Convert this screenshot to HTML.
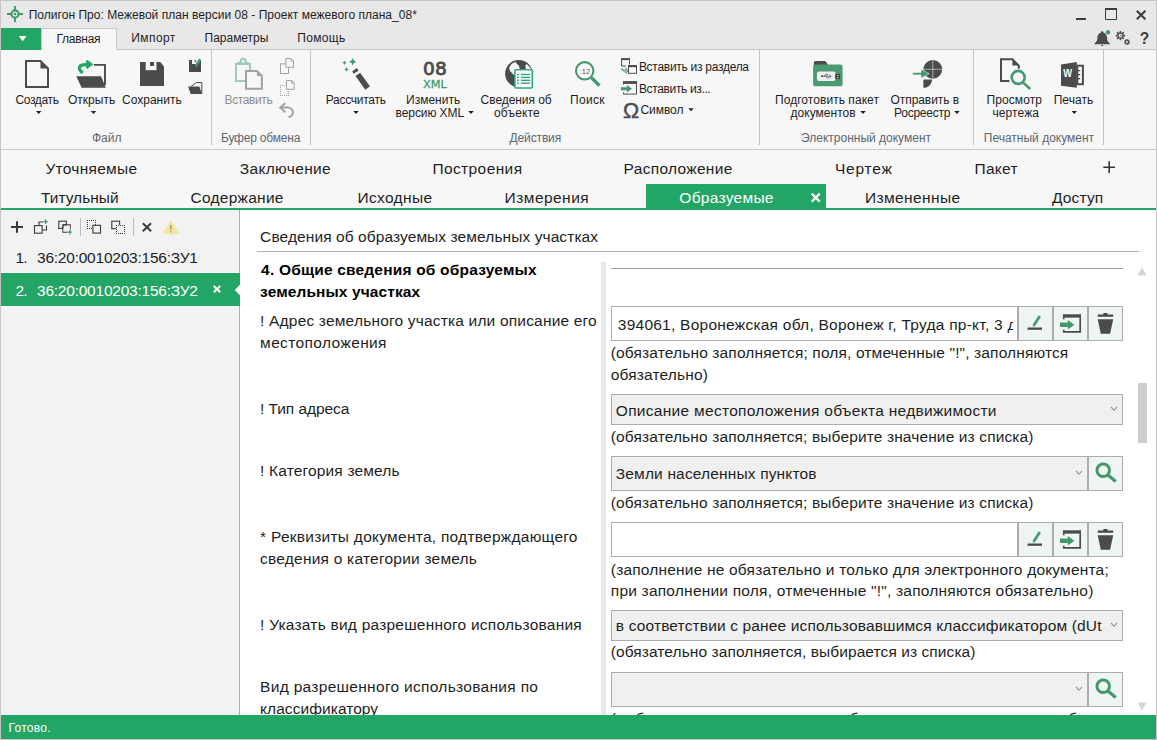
<!DOCTYPE html>
<html lang="ru"><head><meta charset="utf-8"><title>Полигон Про</title>
<style>
html,body{margin:0;padding:0}
body{width:1157px;height:740px;position:relative;overflow:hidden;background:#fff;font-family:"Liberation Sans",sans-serif;}
.t{position:absolute;white-space:nowrap;line-height:20px;z-index:5}
.b{position:absolute;box-sizing:border-box}
svg{position:absolute;overflow:visible}

.in{border:1px solid #a9acb3;background:#fff}
.cb{border:1px solid #a9acb3;background:#f0f0f0}
.bt{border:1px solid #a9acb3;background:#eff5f2}
.sep{background:#c4c4c4;width:1px}

</style></head><body>
<div class="b" style="left:0px;top:0px;width:1157px;height:50px;background:#e8e8e8"></div>
<div class="b" style="left:0px;top:49px;width:1157px;height:101px;background:#f7f7f7;border-top:1px solid #c9c9c9;border-bottom:1px solid #c9c9c9"></div>
<div class="b" style="left:0px;top:150px;width:1157px;height:58px;background:#f7f7f7"></div>
<div class="b" style="left:0px;top:208px;width:1157px;height:2px;background:#22a565"></div>
<div class="b" style="left:1px;top:28px;width:40px;height:22px;background:#22a565"></div>
<svg style="left:18px;top:35px;" width="10" height="8" viewBox="0 0 10 8"><path d="M0.800 1h7.800l-3.900 5.200z" fill="#fff"/></svg>
<div class="b" style="left:41px;top:28px;width:76px;height:22px;background:#f7f7f7;border:1px solid #c9c9c9;border-bottom:none"></div>
<div class="b sep" style="left:211px;top:50px;width:1px;height:95px;"></div>
<div class="b sep" style="left:310px;top:50px;width:1px;height:95px;"></div>
<div class="b sep" style="left:759px;top:50px;width:1px;height:95px;"></div>
<div class="b sep" style="left:973px;top:50px;width:1px;height:95px;"></div>
<div class="b sep" style="left:1103px;top:50px;width:1px;height:95px;"></div>
<div class="b" style="left:646px;top:184px;width:180px;height:26px;background:#22a565"></div>
<div class="b" style="left:0px;top:210px;width:240px;height:505px;background:#f2f2f2;border-right:1px solid #ababb2"></div>
<div class="b" style="left:0px;top:272px;width:239px;height:35px;background:#fdfafb"></div>
<div class="b" style="left:0px;top:273px;width:240px;height:33px;background:#22a565"></div>
<svg style="left:234px;top:284px;" width="6" height="12" viewBox="0 0 6 12"><path d="M6 0.400v11.200L0.800 6z" fill="#fff"/></svg>
<div class="b" style="left:80px;top:218px;width:1px;height:18px;background:#b3bcc7"></div>
<div class="b" style="left:133px;top:218px;width:1px;height:18px;background:#b3bcc7"></div>
<div class="b" style="left:257px;top:251px;width:882px;height:1px;background:#adadb2"></div>
<div class="b" style="left:611px;top:268px;width:512px;height:1px;background:#a0a0a0"></div>
<div class="b" style="left:601px;top:262px;width:5px;height:453px;background:#e9e9e9"></div>
<div class="b" style="left:1138px;top:383px;width:9px;height:60px;background:#cdcdcd"></div>
<svg style="left:1137px;top:267px;" width="10" height="9" viewBox="0 0 10 9"><path d="M5 0.5L9.5 8.5H0.5z" fill="#d4d4d4"/></svg>
<svg style="left:1137px;top:702px;" width="10" height="9" viewBox="0 0 10 9"><path d="M5 8.5L9.5 0.5H0.5z" fill="#d4d4d4"/></svg>
<div class="b in" style="left:611px;top:306px;width:407px;height:35px;"></div>
<div class="b bt" style="left:1018px;top:306px;width:35px;height:35px;"></div><div class="b bt" style="left:1053px;top:306px;width:35px;height:35px;"></div><div class="b bt" style="left:1088px;top:306px;width:35px;height:35px;"></div>
<div class="b cb" style="left:611px;top:394px;width:512px;height:31px;"></div>
<div class="b cb" style="left:611px;top:456px;width:477px;height:35px;"></div>
<div class="b bt" style="left:1088px;top:456px;width:35px;height:35px;"></div>
<div class="b in" style="left:611px;top:522px;width:407px;height:35px;"></div>
<div class="b bt" style="left:1018px;top:522px;width:35px;height:35px;"></div><div class="b bt" style="left:1053px;top:522px;width:35px;height:35px;"></div><div class="b bt" style="left:1088px;top:522px;width:35px;height:35px;"></div>
<div class="b cb" style="left:611px;top:610px;width:512px;height:31px;"></div>
<div class="b cb" style="left:611px;top:672px;width:477px;height:35px;"></div>
<div class="b bt" style="left:1088px;top:672px;width:35px;height:35px;"></div>
<svg style="left:1110px;top:406px;" width="8" height="6" viewBox="0 0 8 6"><path d="M1 1l3 3.2L7 1" fill="none" stroke="#9a9a9a" stroke-width="1.1"/></svg>
<svg style="left:1075px;top:470px;" width="8" height="6" viewBox="0 0 8 6"><path d="M1 1l3 3.2L7 1" fill="none" stroke="#9a9a9a" stroke-width="1.1"/></svg>
<svg style="left:1110px;top:622px;" width="8" height="6" viewBox="0 0 8 6"><path d="M1 1l3 3.2L7 1" fill="none" stroke="#9a9a9a" stroke-width="1.1"/></svg>
<svg style="left:1075px;top:686px;" width="8" height="6" viewBox="0 0 8 6"><path d="M1 1l3 3.2L7 1" fill="none" stroke="#9a9a9a" stroke-width="1.1"/></svg>
<svg style="left:0;top:0;z-index:6" width="1157" height="740" viewBox="0 0 1157 740"><circle cx="15" cy="14" r="3.6" fill="none" stroke="#43996e" stroke-width="2.1"/><circle cx="15" cy="14" r="1.3" fill="#43996e" stroke="none" stroke-width="1"/><path d="M15 6v4.6M15 17.4V22M7 14h4.6M18.4 14H23" fill="none" stroke="#43996e" stroke-width="1.9" /><rect x="1076" y="18" width="10" height="2" fill="#3c3c3c" stroke="none" stroke-width="1" /><path d="M1105.5 9v10.5h11V9z" fill="none" stroke="#3c3c3c" stroke-width="1" /><rect x="1105" y="8" width="12" height="2" fill="#3c3c3c" stroke="none" stroke-width="1" /><path d="M1136.8 10.8l8.6 8.4M1145.4 10.8l-8.6 8.4" fill="none" stroke="#3c3c3c" stroke-width="2.1" /><path d="M1102.2 31.2c-1 0-1.3 .6-1.3 1.4c-2.6 .9-3.6 3.2-3.6 6c0 2.3-.9 3.6-2.6 4.6c-.5 .3-.4 1.1 .3 1.1h14.4c.7 0 .8-.8 .3-1.1c-1.7-1-2.6-2.3-2.6-4.6c0-2.8-1-5.1-3.6-6c0-.8-.3-1.4-1.3-1.4z" fill="#4b4b4b" stroke="none" stroke-width="1" /><rect x="1101.2" y="45" width="2" height="1" fill="#4b4b4b" stroke="none" stroke-width="1" /><circle cx="1108" cy="32.3" r="2.2" fill="#43996e" stroke="none" stroke-width="1"/><circle cx="1120.4" cy="35.6" r="2.5" fill="none" stroke="#4b4b4b" stroke-width="1.3"/><path d="M1123.10 35.60L1125.10 35.60M1122.31 37.51L1123.72 38.92M1120.40 38.30L1120.40 40.30M1118.49 37.51L1117.08 38.92M1117.70 35.60L1115.70 35.60M1118.49 33.69L1117.08 32.28M1120.40 32.90L1120.40 30.90M1122.31 33.69L1123.72 32.28" fill="none" stroke="#4b4b4b" stroke-width="1.6" /><circle cx="1120.4" cy="35.6" r="0.7" fill="#4b4b4b" stroke="none" stroke-width="1"/><circle cx="1127" cy="42" r="1.5" fill="none" stroke="#4b4b4b" stroke-width="1.1"/><path d="M1128.70 42.00L1129.90 42.00M1128.20 43.20L1129.05 44.05M1127.00 43.70L1127.00 44.90M1125.80 43.20L1124.95 44.05M1125.30 42.00L1124.10 42.00M1125.80 40.80L1124.95 39.95M1127.00 40.30L1127.00 39.10M1128.20 40.80L1129.05 39.95" fill="none" stroke="#4b4b4b" stroke-width="1.4000000000000001" /><path d="M26 61h14.5l7.5 7.5V87H26z" fill="none" stroke="#4b4b4b" stroke-width="2" /><path d="M40.5 61v7.5H48z" fill="#4b4b4b" stroke="none" stroke-width="1" /><path d="M36.0 111h5.4l-2.7 3z" fill="#1e1e1e" stroke="none" stroke-width="1" /><path d="M90.8 111h5.4l-2.7 3z" fill="#1e1e1e" stroke="none" stroke-width="1" /><path d="M353.3 111h5.4l-2.7 3z" fill="#1e1e1e" stroke="none" stroke-width="1" /><path d="M1071.6 111h5.4l-2.7 3z" fill="#1e1e1e" stroke="none" stroke-width="1" /><path d="M76.300 76.200h24.700l4.900 11.600H81.700z" fill="#4b4b4b" stroke="none" stroke-width="1" /><path d="M94 64.900h11v20" fill="none" stroke="#4b4b4b" stroke-width="1.9" /><path d="M83 72.400C79.300 71.400 78.600 67.800 80.300 66C81.900 64.300 84.500 64.300 89.500 64.300" fill="none" stroke="#22a565" stroke-width="3.3" /><path d="M86.300 60.800l4.700 3.500l-4.700 3.500" fill="none" stroke="#22a565" stroke-width="2.8" /><path d="M140 62h20.3l3.7 4.4V86H140z" fill="#4b4b4b" stroke="none" stroke-width="1" /><rect x="145.7" y="61.5" width="10.8" height="8.7" fill="#f7f7f7" stroke="none" stroke-width="1" /><rect x="150" y="62" width="4" height="4" fill="#4b4b4b" stroke="none" stroke-width="1" /><rect x="189" y="60" width="12" height="12" fill="#4b4b4b" stroke="none" stroke-width="1" /><rect x="192" y="59.5" width="6" height="4.5" fill="#f7f7f7" stroke="none" stroke-width="1" /><rect x="194.6" y="60.3" width="1.6" height="1.6" fill="#4b4b4b" stroke="none" stroke-width="1" /><path d="M200.300 59.200l-4.800 7.200" fill="none" stroke="#43996e" stroke-width="2.5" /><path d="M191 86.5l5.4-4h5.4v11.2" fill="#fbfbfb" stroke="#4b4b4b" stroke-width="1" /><path d="M188.1 86.4h11.3l2.6 7.6h-11.3z" fill="#4b4b4b" stroke="none" stroke-width="1" /><rect x="236" y="64" width="14" height="17" fill="none" stroke="#9fcbb4" stroke-width="2" /><rect x="237.5" y="61.8" width="11" height="2.6" fill="#9fcbb4" stroke="none" stroke-width="1" /><circle cx="243.2" cy="61.3" r="2.5" fill="#f7f7f7" stroke="#9fcbb4" stroke-width="1.9"/><path d="M246 71h10.9l5 5V88.7H246z" fill="#f7f7f7" stroke="#a2a2a2" stroke-width="2" /><path d="M256.9 71v5h5z" fill="#a2a2a2" stroke="none" stroke-width="1" /><rect x="280.5" y="63.9" width="8" height="9.6" fill="none" stroke="#a2a2a2" stroke-width="1" /><path d="M285.8 58.5h5.2l2.5 2.5v6.3h-7.7z" fill="#f7f7f7" stroke="#a2a2a2" stroke-width="1" /><path d="M291 58.5v2.5h2.5" fill="none" stroke="#a2a2a2" stroke-width="1" /><path d="M280 85h1v1h-1zM280 95h1v1h-1zM282 85h1v1h-1zM282 95h1v1h-1zM284 85h1v1h-1zM284 95h1v1h-1zM286 85h1v1h-1zM286 95h1v1h-1zM288 85h1v1h-1zM288 95h1v1h-1zM280 85h1v1h-1zM288 85h1v1h-1zM280 87h1v1h-1zM288 87h1v1h-1zM280 89h1v1h-1zM288 89h1v1h-1zM280 91h1v1h-1zM288 91h1v1h-1zM280 93h1v1h-1zM288 93h1v1h-1zM280 95h1v1h-1zM288 95h1v1h-1z" fill="#a2a2a2" stroke="none" stroke-width="1" /><path d="M286.5 80.5h5.2l2.5 2.5v6.3h-7.7z" fill="#f7f7f7" stroke="#a2a2a2" stroke-width="1" /><path d="M291.7 80.5v2.5h2.5" fill="none" stroke="#a2a2a2" stroke-width="1" /><path d="M280.5 107.6h6.8c3.4 0 5.6 2 5.6 4.8c0 2.4-1.700 4-4.4 4.8" fill="none" stroke="#a2a2a2" stroke-width="2" /><path d="M285.3 103.2l-5 4.4l5 4.6" fill="none" stroke="#a2a2a2" stroke-width="2" /><path d="M352.200 71.500L356.800 68.100L358.600 70.400L353.700 73.800z" fill="#4b4b4b" stroke="none" stroke-width="1" /><path d="M355.500 76.100L360.100 72.700L369.900 86.300L365.300 89.700z" fill="#4b4b4b" stroke="none" stroke-width="1" /><path d="M352.7 58.0L353.921 60.479L356.4 61.7L353.921 62.92100000000001L352.7 65.4L351.479 62.92100000000001L349.0 61.7L351.479 60.479z" fill="#43996e" stroke="none" stroke-width="1" /><path d="M344.5 60.400000000000006L345.259 61.941L346.8 62.7L345.259 63.459L344.5 65.0L343.741 63.459L342.2 62.7L343.741 61.941z" fill="#43996e" stroke="none" stroke-width="1" /><path d="M346.5 67.10000000000001L347.259 68.641L348.8 69.4L347.259 70.159L346.5 71.7L345.741 70.159L344.2 69.4L345.741 68.641z" fill="#43996e" stroke="none" stroke-width="1" /><text x="434.9" y="75.400" text-anchor="middle" font-family="DejaVu Sans, sans-serif" font-size="18.3" fill="#4b4b4b" stroke="#4b4b4b" stroke-width="0.8" textLength="23.6" lengthAdjust="spacingAndGlyphs">08</text><text x="434.9" y="87.900" text-anchor="middle" font-family="DejaVu Sans, sans-serif" font-size="11.2" fill="#43996e" stroke="#43996e" stroke-width="0.3" textLength="23.7" lengthAdjust="spacingAndGlyphs">XML</text><path d="M468.3 111h5.4l-2.7 3z" fill="#1e1e1e" stroke="none" stroke-width="1" /><circle cx="518.85" cy="73.65" r="13.75" fill="#4b4b4b" stroke="none" stroke-width="1"/><path d="M509 67.500L512 63.600L515.800 61.900L517 64.200L518.500 65.300L519.300 67.200L520 69.500V76H515L512.500 73.600L510 71z" fill="#f8f8f8" stroke="none" stroke-width="1" /><path d="M525.300 65.600L526.800 64L531.500 69.300H526z" fill="#f8f8f8" stroke="none" stroke-width="1" /><rect x="514.9" y="69.8" width="17.4" height="18.2" fill="#fff" stroke="#2fa57d" stroke-width="1.6" rx="1"/><rect x="517" y="73.8" width="2" height="1.4" fill="#2fa57d" stroke="none" stroke-width="1" /><rect x="520.9" y="73.8" width="9.3" height="1.4" fill="#2fa57d" stroke="none" stroke-width="1" /><rect x="517" y="76.7" width="2" height="1.4" fill="#2fa57d" stroke="none" stroke-width="1" /><rect x="520.9" y="76.7" width="9.3" height="1.4" fill="#2fa57d" stroke="none" stroke-width="1" /><rect x="517" y="79.6" width="2" height="1.4" fill="#2fa57d" stroke="none" stroke-width="1" /><rect x="520.9" y="79.6" width="9.3" height="1.4" fill="#2fa57d" stroke="none" stroke-width="1" /><rect x="517" y="82.5" width="2" height="1.4" fill="#2fa57d" stroke="none" stroke-width="1" /><rect x="520.9" y="82.5" width="9.3" height="1.4" fill="#2fa57d" stroke="none" stroke-width="1" /><circle cx="584.7" cy="70.8" r="8.7" fill="#fbfbfb" stroke="#43996e" stroke-width="2.1"/><path d="M591.4 77.6l8 8" fill="none" stroke="#43996e" stroke-width="3.4" /><text x="584.9" y="73.6" text-anchor="middle" font-family="Liberation Sans, sans-serif" font-size="7.4" fill="#555">:12</text><path d="M621.6 59v7h4.5M629.5 59v5.5" fill="none" stroke="#4b4b4b" stroke-width="1" /><rect x="621.1" y="58.1" width="8.9" height="2" fill="#4b4b4b" stroke="none" stroke-width="1" /><rect x="628.5" y="65.7" width="8" height="7.6" fill="#fbfbfb" stroke="#4b4b4b" stroke-width="1" /><rect x="628" y="65.2" width="9" height="2" fill="#4b4b4b" stroke="none" stroke-width="1" /><path d="M626 70.9c-2.800 .2-4-.6-4.300-2.600" fill="none" stroke="#43996e" stroke-width="1.2" /><path d="M625.200 68.300l2.800 2.600l-2.800 2.400" fill="none" stroke="#43996e" stroke-width="1.2" /><rect x="623" y="81.1" width="14" height="2.8" fill="#4b4b4b" stroke="none" stroke-width="1" /><path d="M623.5 83v1.600M623.5 92.500v1.600h13V83" fill="none" stroke="#4b4b4b" stroke-width="1" /><path d="M620.9 87.200h6v-2.300l5.100 3.800l-5.100 3.800v-2.300h-6z" fill="#43996e" stroke="none" stroke-width="1" /><text x="631" y="117.6" text-anchor="middle" font-family="Liberation Sans, sans-serif" font-size="21.6" fill="#4b4b4b" stroke="#4b4b4b" stroke-width="0.45" textLength="16.2" lengthAdjust="spacingAndGlyphs">Ω</text><path d="M688.3 108.2h5.4l-2.7 3z" fill="#1e1e1e" stroke="none" stroke-width="1" /><path d="M813.8 66v-3c0-1.200 .8-2 2-2h8.400c1 0 1.700 .4 2.200 1.200l2 3.800z" fill="#4b4b4b" stroke="none" stroke-width="1" /><rect x="813.1" y="64.4" width="29.5" height="21.9" fill="#4b9a70" stroke="none" stroke-width="1" rx="2.6"/><rect x="816.9" y="71.4" width="18.6" height="9.6" fill="#efefef" stroke="none" stroke-width="1" rx="2"/><rect x="835.3" y="73.9" width="4.8" height="5.1" fill="#3e3e3e" stroke="none" stroke-width="1" /><rect x="837.3" y="75" width="1.2" height="1.1" fill="#efefef" stroke="none" stroke-width="1" /><rect x="837.3" y="77" width="1.2" height="1.1" fill="#efefef" stroke="none" stroke-width="1" /><path d="M821 76.200h9.500M829.300 74.800l1.800 1.400l-1.800 1.400M824 76.200l2-1.800h2M825.500 76.200l1.800 1.700h1.600" fill="none" stroke="#4b4b4b" stroke-width="0.8" /><circle cx="822" cy="76.2" r="0.9" fill="#4b4b4b" stroke="none" stroke-width="1"/><path d="M860.3 111h5.4l-2.7 3z" fill="#1e1e1e" stroke="none" stroke-width="1" /><circle cx="932.8" cy="69.3" r="9.4" fill="#4b4b4b" stroke="none" stroke-width="1"/><path d="M923.400 79.400h8.600c0 4.600-3.800 8.400-8.600 8.400z" fill="#4b4b4b" stroke="none" stroke-width="1" /><path d="M932.800 59.500v20M923 69.300h19.500" fill="none" stroke="#b9b9b9" stroke-width="0.9" /><path d="M912.700 72.500h8.300v-3.300l8.300 4.500l-8.300 4.500v-3.300h-8.300z" fill="#43996e" stroke="#f0f0f0" stroke-width="0.6" /><path d="M954.3 111h5.4l-2.7 3z" fill="#1e1e1e" stroke="none" stroke-width="1" /><path d="M1009.400 81h-8.400V59.200h11.400l6.400 6.400v3.200" fill="none" stroke="#4b4b4b" stroke-width="2" /><path d="M1012.400 59.200v6.400h6.400z" fill="#4b4b4b" stroke="none" stroke-width="1" /><circle cx="1018.2" cy="77.4" r="6.5" fill="#f7f7f7" stroke="#43996e" stroke-width="2.6"/><path d="M1023.200 82.600l7 6.400" fill="none" stroke="#43996e" stroke-width="2.6" /><path d="M1061 64.400l15.800-2.500v25.900l-15.800-2.100z" fill="#4b4b4b" stroke="none" stroke-width="1" /><rect x="1077.3" y="65.7" width="5.6" height="18.5" fill="#fbfbfb" stroke="#4b4b4b" stroke-width="2" /><rect x="1077" y="70" width="3.2" height="1.3" fill="#4b4b4b" stroke="none" stroke-width="1" /><rect x="1077" y="74" width="3.2" height="1.3" fill="#4b4b4b" stroke="none" stroke-width="1" /><rect x="1077" y="78" width="3.2" height="1.3" fill="#4b4b4b" stroke="none" stroke-width="1" /><text x="1067.700" y="77.400" text-anchor="middle" font-family="Liberation Sans, sans-serif" font-weight="bold" font-size="10.4" fill="#fff" textLength="8.8" lengthAdjust="spacingAndGlyphs">W</text><text x="1144.600" y="43.700" text-anchor="middle" font-family="Liberation Sans, sans-serif" font-weight="bold" font-size="15.6" fill="#3c3c3c">?</text><path d="M1103.300 167.200h11.700M1109.200 161.300v11.700" fill="none" stroke="#333" stroke-width="1.6" /><path d="M811.700 193.600l8 8M819.700 193.600l-8 8" fill="none" stroke="#fff" stroke-width="2.2" /><path d="M11 227h12M17 221.200v11.600" fill="none" stroke="#3a3a3a" stroke-width="2" /><path d="M43 222h-4v8h7.500v-4.500" fill="none" stroke="#3a3a3a" stroke-width="1.1" /><rect x="34.5" y="225.6" width="7.6" height="7.6" fill="#f2f2f2" stroke="#3a3a3a" stroke-width="1.1" /><path d="M43.300 221.600h4.600M45.600 219.300v4.600" fill="none" stroke="#43996e" stroke-width="1.2" /><rect x="58.8" y="221.2" width="7.6" height="7.2" fill="none" stroke="#3a3a3a" stroke-width="1.1" /><path d="M62.900 224.900h7.300v4.500M62.900 224.900v7.200h4.500" fill="none" stroke="#3a3a3a" stroke-width="1.1" /><rect x="63.5" y="225.5" width="6.2" height="6" fill="#f2f2f2" stroke="none" stroke-width="1" /><path d="M62.900 228.400v-3.500h3.500" fill="none" stroke="#3a3a3a" stroke-width="1.1" /><path d="M67.500 232.200h4.600M69.800 229.900v4.600" fill="none" stroke="#43996e" stroke-width="1.2" /><path d="M87 220h1v1h-1zM87 228h1v1h-1zM89 220h1v1h-1zM89 228h1v1h-1zM91 220h1v1h-1zM91 228h1v1h-1zM93 220h1v1h-1zM93 228h1v1h-1zM95 220h1v1h-1zM95 228h1v1h-1zM87 220h1v1h-1zM95 220h1v1h-1zM87 222h1v1h-1zM95 222h1v1h-1zM87 224h1v1h-1zM95 224h1v1h-1zM87 226h1v1h-1zM95 226h1v1h-1zM87 228h1v1h-1zM95 228h1v1h-1z" fill="#3a3a3a" stroke="none" stroke-width="1" /><rect x="92.9" y="225.3" width="7.6" height="7.8" fill="#f2f2f2" stroke="#3a3a3a" stroke-width="1.1" /><rect x="111.8" y="221.2" width="7.8" height="7.5" fill="none" stroke="#3a3a3a" stroke-width="1.1" /><rect x="116" y="225" width="9" height="9" fill="#f2f2f2" stroke="none" stroke-width="1" /><path d="M116 225h1v1h-1zM116 233h1v1h-1zM118 225h1v1h-1zM118 233h1v1h-1zM120 225h1v1h-1zM120 233h1v1h-1zM122 225h1v1h-1zM122 233h1v1h-1zM124 225h1v1h-1zM124 233h1v1h-1zM116 225h1v1h-1zM124 225h1v1h-1zM116 227h1v1h-1zM124 227h1v1h-1zM116 229h1v1h-1zM124 229h1v1h-1zM116 231h1v1h-1zM124 231h1v1h-1zM116 233h1v1h-1zM124 233h1v1h-1z" fill="#3a3a3a" stroke="none" stroke-width="1" /><path d="M142.800 223.300l8.300 8M151.100 223.300l-8.300 8" fill="none" stroke="#3a3a3a" stroke-width="2" /><path d="M170.800 220.600l7.800 13h-15.600z" fill="#f6e69a" stroke="#f6e69a" stroke-width="0.8" stroke-linejoin="round"/><rect x="170.1" y="225" width="1.5" height="5" fill="#9a9a9a" stroke="none" stroke-width="1" /><rect x="170.1" y="231" width="1.5" height="1.5" fill="#9a9a9a" stroke="none" stroke-width="1" /><path d="M213.700 285.900l6.600 6.400M220.300 285.900l-6.600 6.400" fill="none" stroke="#fff" stroke-width="2" /><path d="M1039.8 316.1l-6 9.300" fill="none" stroke="#43996e" stroke-width="2.7" /><path d="M1033.3 324.6l-.7 2.400l2.300-1.300z" fill="#43996e" stroke="none" stroke-width="1" /><rect x="1027.6" y="327.5" width="14.4" height="2.3" fill="#4b4b4b" stroke="none" stroke-width="1" /><rect x="1062.9" y="314.3" width="18.1" height="3.3" fill="#4b4b4b" stroke="none" stroke-width="1" /><path d="M1063.7 317.3v2M1063.7 329.7v2.200h16.500V317.3" fill="none" stroke="#4b4b4b" stroke-width="1.7" /><path d="M1060 322.6h7.800v-2.500l6.500 4.700l-6.500 4.700v-2.500h-7.800z" fill="#43996e" stroke="none" stroke-width="1" /><rect x="1097.7" y="314.5" width="15.5" height="2.3" fill="#4b4b4b" stroke="none" stroke-width="1" /><rect x="1103.4" y="313" width="4.1" height="2" fill="#4b4b4b" stroke="none" stroke-width="1" /><path d="M1097.7 319.2h15.500l-3.100 14.500h-9.300z" fill="#4b4b4b" stroke="none" stroke-width="1" /><path d="M1039.8 532.0999999999999l-6 9.300" fill="none" stroke="#43996e" stroke-width="2.7" /><path d="M1033.3 540.5999999999999l-.7 2.400l2.300-1.300z" fill="#43996e" stroke="none" stroke-width="1" /><rect x="1027.6" y="543.5" width="14.4" height="2.3" fill="#4b4b4b" stroke="none" stroke-width="1" /><rect x="1062.9" y="530.3" width="18.1" height="3.3" fill="#4b4b4b" stroke="none" stroke-width="1" /><path d="M1063.7 533.3v2M1063.7 545.6999999999999v2.200h16.500V533.3" fill="none" stroke="#4b4b4b" stroke-width="1.7" /><path d="M1060 538.5999999999999h7.800v-2.500l6.500 4.700l-6.500 4.700v-2.500h-7.800z" fill="#43996e" stroke="none" stroke-width="1" /><rect x="1097.7" y="530.5" width="15.5" height="2.3" fill="#4b4b4b" stroke="none" stroke-width="1" /><rect x="1103.4" y="529" width="4.1" height="2" fill="#4b4b4b" stroke="none" stroke-width="1" /><path d="M1097.7 535.2h15.500l-3.100 14.500h-9.300z" fill="#4b4b4b" stroke="none" stroke-width="1" /><circle cx="1103.2" cy="470.3" r="6.3" fill="none" stroke="#43996e" stroke-width="3"/><path d="M1108.2 475.3l7.500 6.300" fill="none" stroke="#43996e" stroke-width="3.2" /><circle cx="1103.2" cy="686.3" r="6.3" fill="none" stroke="#43996e" stroke-width="3"/><path d="M1108.2 691.3l7.500 6.300" fill="none" stroke="#43996e" stroke-width="3.2" /></svg>
<div class="t" id="t0" style="left:28.70px;top:5px;font-size:12px;color:#1e1e1e;letter-spacing:0.027px;">Полигон Про: Межевой план версии 08 - Проект межевого плана_08*</div>
<div class="t" id="t1" style="left:56.50px;top:29px;font-size:12px;color:#1e1e1e;letter-spacing:-0.266px;">Главная</div>
<div class="t" id="t2" style="left:131.30px;top:28px;font-size:12px;color:#1e1e1e;letter-spacing:0.420px;">Импорт</div>
<div class="t" id="t3" style="left:204.60px;top:28px;font-size:12px;color:#1e1e1e;letter-spacing:-0.025px;">Параметры</div>
<div class="t" id="t4" style="left:297.30px;top:28px;font-size:12px;color:#1e1e1e;letter-spacing:0.300px;">Помощь</div>
<div class="t" id="t5" style="left:15.40px;top:90px;font-size:12px;color:#1e1e1e;letter-spacing:-0.350px;">Создать</div>
<div class="t" id="t6" style="left:68.00px;top:90px;font-size:12px;color:#1e1e1e;">Открыть</div>
<div class="t" id="t7" style="left:122.00px;top:90px;font-size:12px;color:#1e1e1e;">Сохранить</div>
<div class="t" id="t8" style="left:224.60px;top:90px;font-size:12px;color:#8f8f8f;letter-spacing:-0.400px;">Вставить</div>
<div class="t" id="t9" style="left:325.70px;top:90px;font-size:12px;color:#1e1e1e;letter-spacing:-0.255px;">Рассчитать</div>
<div class="t" id="t10" style="left:406.00px;top:90px;font-size:12px;color:#1e1e1e;">Изменить</div>
<div class="t" id="t11" style="left:395.60px;top:103px;font-size:12px;color:#1e1e1e;letter-spacing:-0.090px;">версию XML</div>
<div class="t" id="t12" style="left:480.60px;top:90px;font-size:12px;color:#1e1e1e;letter-spacing:-0.060px;">Сведения об</div>
<div class="t" id="t13" style="left:494.00px;top:103px;font-size:12px;color:#1e1e1e;letter-spacing:0.167px;">объекте</div>
<div class="t" id="t14" style="left:570.00px;top:90px;font-size:12px;color:#1e1e1e;letter-spacing:0.300px;">Поиск</div>
<div class="t" id="t15" style="left:638.90px;top:57px;font-size:12px;color:#1e1e1e;letter-spacing:-0.278px;">Вставить из раздела</div>
<div class="t" id="t16" style="left:638.90px;top:79px;font-size:12px;color:#1e1e1e;letter-spacing:-0.353px;">Вставить из...</div>
<div class="t" id="t17" style="left:640.40px;top:100px;font-size:12px;color:#1e1e1e;letter-spacing:-0.040px;">Символ</div>
<div class="t" id="t18" style="left:775.00px;top:90px;font-size:12px;color:#1e1e1e;letter-spacing:0.051px;">Подготовить пакет</div>
<div class="t" id="t19" style="left:790.60px;top:103px;font-size:12px;color:#1e1e1e;letter-spacing:0.021px;">документов</div>
<div class="t" id="t20" style="left:890.60px;top:90px;font-size:12px;color:#1e1e1e;letter-spacing:-0.080px;">Отправить в</div>
<div class="t" id="t21" style="left:894.00px;top:103px;font-size:12px;color:#1e1e1e;letter-spacing:-0.250px;">Росреестр</div>
<div class="t" id="t22" style="left:986.40px;top:90px;font-size:12px;color:#1e1e1e;letter-spacing:0.115px;">Просмотр</div>
<div class="t" id="t23" style="left:992.50px;top:103px;font-size:12px;color:#1e1e1e;letter-spacing:0.083px;">чертежа</div>
<div class="t" id="t24" style="left:1053.70px;top:90px;font-size:12px;color:#1e1e1e;letter-spacing:0.060px;">Печать</div>
<div class="t" id="t25" style="left:92.00px;top:128px;font-size:12px;color:#5c6670;">Файл</div>
<div class="t" id="t26" style="left:221.00px;top:128px;font-size:12px;color:#5c6670;letter-spacing:-0.199px;">Буфер обмена</div>
<div class="t" id="t27" style="left:509.60px;top:128px;font-size:12px;color:#5c6670;letter-spacing:-0.143px;">Действия</div>
<div class="t" id="t28" style="left:801.00px;top:128px;font-size:12px;color:#5c6670;">Электронный документ</div>
<div class="t" id="t29" style="left:983.80px;top:128px;font-size:12px;color:#5c6670;">Печатный документ</div>
<div class="t" id="t30" style="left:45.40px;top:159px;font-size:15.5px;color:#1e1e1e;letter-spacing:0.288px;">Уточняемые</div>
<div class="t" id="t31" style="left:239.70px;top:159px;font-size:15.5px;color:#1e1e1e;letter-spacing:0.355px;">Заключение</div>
<div class="t" id="t32" style="left:432.40px;top:159px;font-size:15.5px;color:#1e1e1e;letter-spacing:0.400px;">Построения</div>
<div class="t" id="t33" style="left:623.60px;top:159px;font-size:15.5px;color:#1e1e1e;letter-spacing:0.300px;">Расположение</div>
<div class="t" id="t34" style="left:835.00px;top:159px;font-size:15.5px;color:#1e1e1e;letter-spacing:0.780px;">Чертеж</div>
<div class="t" id="t35" style="left:974.50px;top:159px;font-size:15.5px;color:#1e1e1e;letter-spacing:0.300px;">Пакет</div>
<div class="t" id="t36" style="left:40.90px;top:188px;font-size:15.5px;color:#1e1e1e;letter-spacing:0.025px;">Титульный</div>
<div class="t" id="t37" style="left:190.50px;top:188px;font-size:15.5px;color:#1e1e1e;letter-spacing:0.267px;">Содержание</div>
<div class="t" id="t38" style="left:357.40px;top:188px;font-size:15.5px;color:#1e1e1e;letter-spacing:0.372px;">Исходные</div>
<div class="t" id="t39" style="left:504.60px;top:188px;font-size:15.5px;color:#1e1e1e;letter-spacing:0.461px;">Измерения</div>
<div class="t" id="t40" style="left:679.30px;top:188px;font-size:15.5px;color:#ffffff;letter-spacing:0.288px;">Образуемые</div>
<div class="t" id="t41" style="left:865.00px;top:188px;font-size:15.5px;color:#1e1e1e;letter-spacing:0.400px;">Измененные</div>
<div class="t" id="t42" style="left:1052.00px;top:188px;font-size:15.5px;color:#1e1e1e;letter-spacing:0.160px;">Доступ</div>
<div class="t" id="t43" style="left:15.60px;top:248px;font-size:15.5px;color:#1e1e1e;letter-spacing:-1.000px;">1.</div>
<div class="t" id="t44" style="left:37.00px;top:248px;font-size:15.5px;color:#1e1e1e;letter-spacing:-0.230px;">36:20:0010203:156:ЗУ1</div>
<div class="t" id="t45" style="left:15.60px;top:281px;font-size:15.5px;color:#ffffff;letter-spacing:-1.000px;">2.</div>
<div class="t" id="t46" style="left:37.00px;top:281px;font-size:15.5px;color:#ffffff;letter-spacing:-0.230px;">36:20:0010203:156:ЗУ2</div>
<div class="t" id="t47" style="left:260.10px;top:227px;font-size:15.5px;color:#1e1e1e;letter-spacing:0.088px;">Сведения об образуемых земельных участках</div>
<div class="t" id="t48" style="left:261.10px;top:260px;font-size:15.5px;color:#000;font-weight:bold;letter-spacing:0.190px;">4. Общие сведения об образуемых</div>
<div class="t" id="t49" style="left:260.10px;top:282px;font-size:15.5px;color:#000;font-weight:bold;letter-spacing:0.100px;">земельных участках</div>
<div class="t" id="t50" style="left:260.10px;top:311px;font-size:15.5px;color:#1e1e1e;letter-spacing:0.184px;">! Адрес земельного участка или описание его</div>
<div class="t" id="t51" style="left:260.10px;top:333px;font-size:15.5px;color:#1e1e1e;letter-spacing:0.377px;">местоположения</div>
<div class="t" id="t52" style="left:260.10px;top:399px;font-size:15.5px;color:#1e1e1e;letter-spacing:-0.074px;">! Тип адреса</div>
<div class="t" id="t53" style="left:260.10px;top:461px;font-size:15.5px;color:#1e1e1e;letter-spacing:0.159px;">! Категория земель</div>
<div class="t" id="t54" style="left:260.10px;top:527px;font-size:15.5px;color:#1e1e1e;letter-spacing:0.262px;">* Реквизиты документа, подтверждающего</div>
<div class="t" id="t55" style="left:260.10px;top:549px;font-size:15.5px;color:#1e1e1e;letter-spacing:0.219px;">сведения о категории земель</div>
<div class="t" id="t56" style="left:260.10px;top:615px;font-size:15.5px;color:#1e1e1e;letter-spacing:0.222px;">! Указать вид разрешенного использования</div>
<div class="t" id="t57" style="left:260.10px;top:677px;font-size:15.5px;color:#1e1e1e;letter-spacing:0.303px;">Вид разрешенного использования по</div>
<div class="t" id="t58" style="left:260.10px;top:699px;font-size:15.5px;color:#1e1e1e;letter-spacing:0.053px;">классификатору</div>
<div class="t" id="t59" style="left:617.80px;top:315px;font-size:15.5px;color:#1e1e1e;letter-spacing:0.245px;width:395.60px;overflow:hidden;">394061, Воронежская обл, Воронеж г, Труда пр-кт, 3 д</div>
<div class="t" id="t60" style="left:610.80px;top:343px;font-size:15.5px;color:#1e1e1e;letter-spacing:0.140px;">(обязательно заполняется; поля, отмеченные "!", заполняются</div>
<div class="t" id="t61" style="left:610.80px;top:365px;font-size:15.5px;color:#1e1e1e;letter-spacing:0.145px;">обязательно)</div>
<div class="t" id="t62" style="left:615.80px;top:401px;font-size:15.5px;color:#1e1e1e;letter-spacing:0.293px;">Описание местоположения объекта недвижимости</div>
<div class="t" id="t63" style="left:610.80px;top:427px;font-size:15.5px;color:#1e1e1e;letter-spacing:0.125px;">(обязательно заполняется; выберите значение из списка)</div>
<div class="t" id="t64" style="left:615.80px;top:464px;font-size:15.5px;color:#1e1e1e;letter-spacing:0.157px;">Земли населенных пунктов</div>
<div class="t" id="t65" style="left:610.80px;top:493px;font-size:15.5px;color:#1e1e1e;letter-spacing:0.125px;">(обязательно заполняется; выберите значение из списка)</div>
<div class="t" id="t66" style="left:610.80px;top:560px;font-size:15.5px;color:#1e1e1e;letter-spacing:0.187px;">(заполнение не обязательно и только для электронного документа;</div>
<div class="t" id="t67" style="left:610.80px;top:581px;font-size:15.5px;color:#1e1e1e;letter-spacing:0.210px;">при заполнении поля, отмеченные "!", заполняются обязательно)</div>
<div class="t" id="t68" style="left:615.80px;top:616px;font-size:15.5px;color:#1e1e1e;letter-spacing:0.145px;">в соответствии с ранее использовавшимся классификатором (dUt</div>
<div class="t" id="t69" style="left:610.80px;top:642px;font-size:15.5px;color:#1e1e1e;letter-spacing:0.078px;">(обязательно заполняется, выбирается из списка)</div>
<div class="t" id="t70" style="left:610.80px;top:709px;font-size:15.5px;color:#1e1e1e;letter-spacing:0.001px;">(выбирается из списка или же набирается вручную, если не выбрано</div>
<div class="t" id="t71" style="left:8.60px;top:718px;font-size:12px;color:#ffffff;letter-spacing:0.250px;z-index:12;">Готово.</div>
<div class="b" style="left:0px;top:715px;width:1157px;height:24px;background:#22a565;z-index:9"></div>
<div class="b" style="left:0px;top:0px;width:1157px;height:740px;border:1px solid #c6c6c6;z-index:10;pointer-events:none"></div>
</body></html>
